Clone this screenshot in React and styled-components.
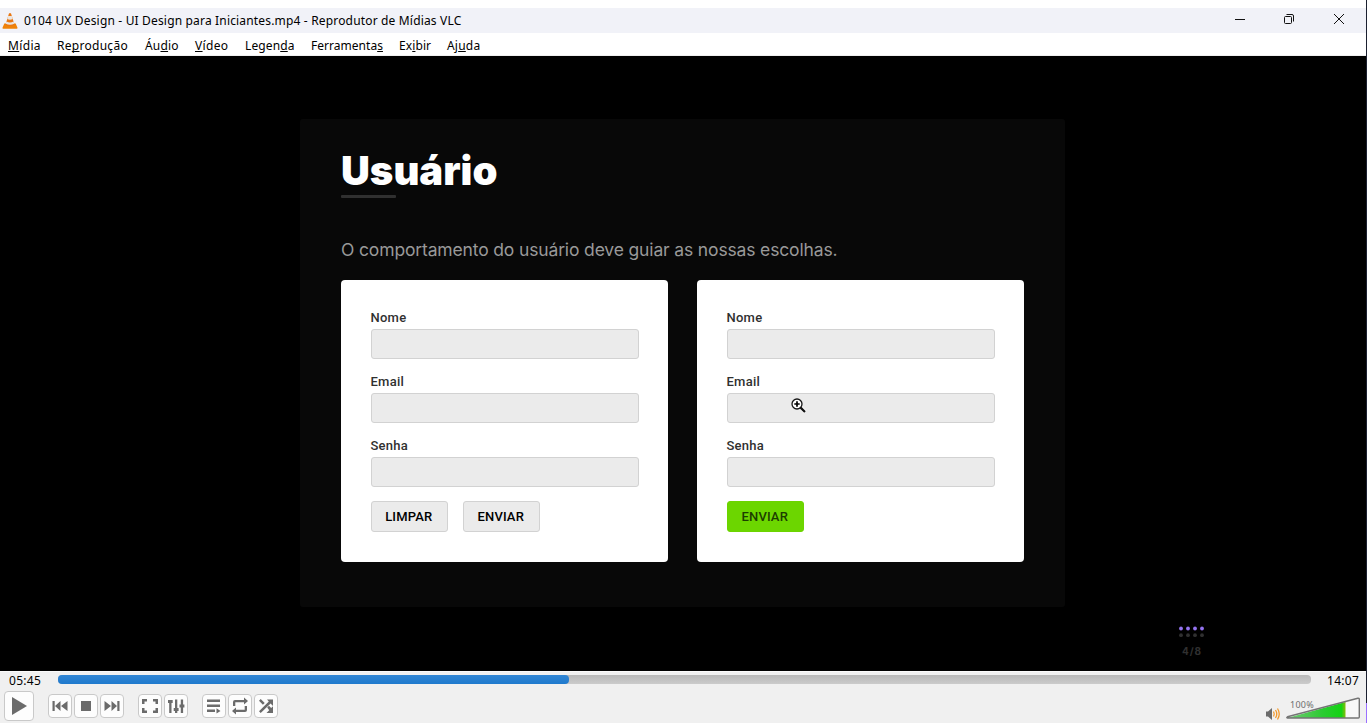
import React from 'react';
import styled, { createGlobalStyle } from 'styled-components';

const GlobalStyle = createGlobalStyle`
  * { box-sizing: border-box; }
  body { margin: 0; background: #fff; overflow: hidden; }
`;

const Screen = styled.div`
  display: flex;
  width: 1367px;
  height: 723px;
  overflow: hidden;
  font-family: 'Noto Sans', 'Open Sans', sans-serif;
  font-size: 12px;
  color: #000;
`;

const PlayerWindow = styled.div`
  display: flex;
  flex-direction: column;
  width: 1366px;
  padding-top: 8px;
  background: #fff;
`;

const DesktopEdge = styled.div`
  width: 1px;
  background: linear-gradient(#1b2030 0 703px, #9a70ff 703px);
`;

const TitleBar = styled.header`
  display: flex;
  align-items: center;
  height: 25px;
  padding-left: 2px;
  background: #f1f2f8;
`;

const WindowTitle = styled.span`
  flex: 1;
  margin-left: 6px;
  line-height: 25px;
  white-space: nowrap;
  letter-spacing: ${(p) => p.$spacing}px;
`;

const WindowButtons = styled.div`
  display: flex;
  align-items: center;
  gap: 38px;
  padding-right: 21px;

  svg { display: block; margin-top: -3px; }
`;

const MenuBar = styled.nav`
  display: flex;
  height: 23px;
  padding-left: 8px;
  border-bottom: 1px solid #f0f0f0;
  background: #fff;
`;

const MenuItem = styled.span`
  width: ${(p) => p.$width}px;
  line-height: 26px;
  letter-spacing: ${(p) => p.$spacing}px;
  white-space: nowrap;

  u { text-underline-offset: 1px; text-decoration-thickness: 1px; text-decoration-skip-ink: none; }
`;

const Video = styled.main`
  position: relative;
  height: 615px;
  padding: 63px 0 0 300px;
  background: #000;
`;

const Slide = styled.section`
  width: 765px;
  height: 488px;
  padding: 29px 41px 0;
  border-radius: 3px;
  background: #080808;
`;

const Heading = styled.h1`
  height: 47px;
  margin: 0;
  font: 900 40px/45px Inter, sans-serif;
  letter-spacing: ${(p) => p.$spacing}px;
  color: #fff;
`;

const Rule = styled.div`
  width: 55px;
  height: 3px;
  border-radius: 1px;
  background: #303030;
`;

const Lead = styled.p`
  height: 24px;
  margin: 40px 0 18px;
  font: 400 17.5px/24px Inter, sans-serif;
  letter-spacing: ${(p) => p.$spacing}px;
  white-space: nowrap;
  color: #999;
`;

const Cards = styled.div`
  display: flex;
  gap: 29px;
`;

const Card = styled.form`
  width: 327px;
  height: 282px;
  padding: 29px 29.5px 0;
  border-radius: 4px;
  background: #fff;
`;

const Field = styled.label`
  display: block;
  height: 64px;
  font: 500 13px/18px Roboto, sans-serif;
  letter-spacing: 0.25px;
  color: #303030;
`;

const Input = styled.span`
  display: block;
  height: 30px;
  margin-top: 2px;
  border: 1px solid #d2d2d2;
  border-radius: 3px;
  background: #ebebeb;
`;

const Actions = styled.div`
  display: flex;
  gap: 14.5px;
`;

const FormButton = styled.button`
  width: 77.5px;
  height: 31px;
  padding: 0 1px 0 0;
  border: 1px solid ${(p) => (p.$primary ? '#6cd400' : '#d2d2d2')};
  border-radius: 3px;
  background: ${(p) => (p.$primary ? '#6cd600' : '#ebebeb')};
  color: ${(p) => (p.$primary ? '#1c3d00' : '#000')};
  font: 500 13px/29px Roboto, sans-serif;
  letter-spacing: 0.15px;
`;

const ZoomCursor = styled.svg`
  position: absolute;
  left: 790px;
  top: 340.5px;
`;

const PageMarker = styled.div`
  position: absolute;
  left: 1178px;
  top: 570px;
  width: 28px;
  text-align: center;
  font: 700 10px/12px Inter, sans-serif;
  letter-spacing: 0.9px;
  color: #303030;

  svg { display: block; margin-bottom: 7px; }
`;

const Controls = styled.footer`
  height: 52px;
  border-top: 1px solid #fafafa;
  background: #f0f0f0;
`;

const SeekRow = styled.div`
  display: flex;
  align-items: flex-start;
  height: 17px;
  padding: 0 6px 0 9px;
`;

const Time = styled.span`
  width: ${(p) => p.$width}px;
  line-height: 17px;
  letter-spacing: ${(p) => p.$spacing}px;
`;

const Track = styled.div`
  width: 1253px;
  height: 9px;
  margin: 3px 16px 0 0;
  border-radius: 4px;
  background: linear-gradient(#b8b8b8, #cbcbcb);
`;

const Progress = styled.div`
  height: 9px;
  border-radius: 4px;
  background: linear-gradient(#3186d4, #1f79cd);
`;

const ToolRow = styled.div`
  display: flex;
  align-items: flex-start;
  height: 34px;
  padding: 2px 0 0 4px;
`;

const ToolGroup = styled.div`
  display: flex;
  gap: 2px;
  margin: 3px 14px 0 0;
`;

const ToolButton = styled.div`
  display: flex;
  align-items: center;
  justify-content: center;
  width: ${(p) => (p.$large ? 30 : 24)}px;
  height: ${(p) => (p.$large ? 30 : 24)}px;
  margin-right: ${(p) => (p.$large ? 14 : 0)}px;
  border: 1px solid #c9c9c9;
  border-radius: 4px;
  background: #fdfdfd;
`;

const Volume = styled.div`
  position: relative;
  display: flex;
  margin: 6px 5px 0 auto;
`;

const VolumeLabel = styled.span`
  position: absolute;
  left: 25px;
  top: 2px;
  font-size: 9px;
  line-height: 12px;
  letter-spacing: 0.25px;
  color: #6e6e6e;
`;

const Cone = () => (
  <svg width="16" height="18" viewBox="0 0 16 18">
    <path d="M2.3 11.5h11.4l1.8 4.3q.2.9-.8.9H1.3q-1 0-.8-.9z" fill="#ef8208" />
    <path d="M7 1.5q1-.8 2 0l3.6 11.2Q8 15.3 3.4 12.7z" fill="#e97612" />
    <path d="M6.2 4h3.6l1 3.1Q8 8.4 5.2 7.1zM4.4 9.600q3.600 1.700 7.200 0l.7 2.200q-4.300 2.100-8.600 0z" fill="#e9e6e3" />
  </svg>
);

const glyphs = {
  previous: (
    <path d="M3.500 6h2.200v10H3.500zM11.500 6v10l-5.500-5zM18.500 6v10L12 11z" />
  ),
  stop: <path d="M6 6h10v10H6z" />,
  next: <path d="M3.500 6v10l6.500-5zM10.500 6v10l5.500-5zM16.300 6h2.200v10h-2.200z" />,
  fullscreen: (
    <path d="M3 4h5v2.5H5.500V9H3zM14 4h5v5h-2.500V6.500H14zM3 13h2.500v2.500H8V18H3zM16.500 13H19v5h-5v-2.500h2.500z" />
  ),
  sliders: (
    <path d="M4.200 5h2.300v13H4.200zM10 4.500h2.300V18H10zM15.800 4.500h2.300V18h-2.300zM3 5h4.700v3H3zM8.700 13h4.900v3H8.700zM14.500 9.500h4.900v3h-4.900z" />
  ),
  playlist: (
    <path d="M4 4.500h13V7H4zM4 9.500h13V12H4zM4 14.500h8V17H4zM13.500 13.300v5.200l4-2.600z" />
  ),
  loop: (
    <path d="M4 11V7q0-2 2-2h9V2.500L19 6l-4 3.500V7.300H6.300V11zM18 11v4q0 2-2 2H7v2.500L3 16l4-3.500v2.200h8.700V11z" />
  ),
  shuffle: (
    <path d="M4 5.800 5.700 4l4 4-1.800 1.800zM12.200 12.400l1.800-1.600 2.200 2.300L18 11.300V18h-6.500l2.700-2.800zM4 16.200 13.800 6.600 12 4.600h6V11l-2.400-2.600L5.700 18z" />
  ),
};

const Glyph = ({ name }) => (
  <svg width="22" height="22" viewBox="0 0 22 22" fill="#6b6b6b">{glyphs[name]}</svg>
);

const Magnifier = () => (
  <ZoomCursor width="18" height="18" viewBox="0 0 18 18">
    <path d="m10.5 10.5 4.7 4.7" stroke="#fff" strokeWidth="4" opacity=".7" />
    <circle cx="7" cy="7" r="5" fill="#fff" stroke="#161616" strokeWidth="1.3" />
    <path d="M4.3 7h5.4M7 4.3v5.4" stroke="#000" strokeWidth="1.7" />
    <path d="m10.6 10.6 4.4 4.4" stroke="#111" strokeWidth="2.2" />
  </ZoomCursor>
);

const menus = [
  ['', 'M', 'ídia', 49, 0.35],
  ['Re', 'p', 'rodução', 88, 0.28],
  ['Áu', 'd', 'io', 50, 0.2],
  ['', 'V', 'ídeo', 50, 0.35],
  ['Legen', 'd', 'a', 66, 0.12],
  ['Ferramenta', 's', '', 88, 0.03],
  ['Ex', 'i', 'bir', 48, 0.1],
  ['Aj', 'u', 'da', 50, 0.2],
];

const toolGroups = [
  ['previous', 'stop', 'next'],
  ['fullscreen', 'sliders'],
  ['playlist', 'loop', 'shuffle'],
];

function SignupCard({ children }) {
  return (
    <Card>
      {['Nome', 'Email', 'Senha'].map((name) => (
        <Field key={name}>{name}<Input /></Field>
      ))}
      <Actions>{children}</Actions>
    </Card>
  );
}

export default function App() {
  return (
    <Screen>
      <GlobalStyle />
      <PlayerWindow>
        <TitleBar>
          <Cone />
          <WindowTitle $spacing={0.168}>0104 UX Design - UI Design para Iniciantes.mp4 - Reprodutor de Mídias VLC</WindowTitle>
          <WindowButtons>
            <svg width="12" height="12" fill="none" stroke="#111"><path d="M2 6.500h10" /></svg>
            <svg width="12" height="12" fill="none" stroke="#111">
              <rect x="1.500" y="3.500" width="7" height="7" rx="1" />
              <path d="M3.500 1.500H9q1.500 0 1.500 1.500V8.500" />
            </svg>
            <svg width="12" height="12" fill="none" stroke="#111"><path d="m1 1 10 10M11 1 1 11" /></svg>
          </WindowButtons>
        </TitleBar>
        <MenuBar>
          {menus.map(([before, key, after, width, spacing]) => (
            <MenuItem key={before + key} $width={width} $spacing={spacing}>{before}<u>{key}</u>{after}</MenuItem>
          ))}
        </MenuBar>
        <Video>
          <Slide>
            <Heading $spacing={0}>Usuário</Heading>
            <Rule />
            <Lead $spacing={-0.148}>O comportamento do usuário deve guiar as nossas escolhas.</Lead>
            <Cards>
              <SignupCard>
                <FormButton type="button">LIMPAR</FormButton>
                <FormButton type="button">ENVIAR</FormButton>
              </SignupCard>
              <SignupCard>
                <FormButton type="button" $primary>ENVIAR</FormButton>
              </SignupCard>
            </Cards>
          </Slide>
          <Magnifier />
          <PageMarker>
            <svg width="28" height="12">
              {[3, 10, 17, 24].map((x) => (
                <g key={x}>
                  <circle cx={x} cy="2.500" r="1.900" fill="#9473f0" />
                  <circle cx={x} cy="9.200" r="1.900" fill="#303030" />
                </g>
              ))}
            </svg>
            4/8
          </PageMarker>
        </Video>
        <Controls>
          <SeekRow>
            <Time $width={49} $spacing={0.3}>05:45</Time>
            <Track><Progress style={{ width: 511 }} /></Track>
            <Time $width={33} $spacing={0.3}>14:07</Time>
          </SeekRow>
          <ToolRow>
            <ToolButton $large>
              <svg width="28" height="28" fill="#6b6b6b"><path d="M7 5v18l15-9z" /></svg>
            </ToolButton>
            {toolGroups.map((group) => (
              <ToolGroup key={group[0]}>
                {group.map((name) => <ToolButton key={name}><Glyph name={name} /></ToolButton>)}
              </ToolGroup>
            ))}
            <Volume>
              <VolumeLabel>100%</VolumeLabel>
              <svg width="96" height="25" viewBox="0 0 96 25">
                <defs>
                  <linearGradient id="level">
                    <stop offset="0" stopColor="#75c878" />
                    <stop offset=".6" stopColor="#2ccb32" />
                    <stop offset=".93" stopColor="#13d313" />
                    <stop offset="1" stopColor="#86bd0b" />
                  </linearGradient>
                </defs>
                <path d="M1 14.500h2l4-3.500v12l-4-3.500H1z" fill="#6b6b6b" />
                <path d="M8.500 14.500q1.500 2.500 0 5M10.500 13q2.600 4 0 8M12.500 11.500q3.500 5.500 0 11" fill="none" stroke="#f49a2c" strokeWidth="1.300" />
                <path d="M22 21 93.500 1.500V21z" fill="#f8f8f8" />
                <path d="M22 21 80.500 5V21z" fill="url(#level)" />
                <path d="M22.500 19.800 92.800 1.300q1.500-.3 1.500 1V20q0 1-1 1H22.500q-1.500-.3 0-1.200z" fill="none" stroke="#747474" strokeWidth="1.400" />
              </svg>
            </Volume>
          </ToolRow>
        </Controls>
      </PlayerWindow>
      <DesktopEdge />
    </Screen>
  );
}
